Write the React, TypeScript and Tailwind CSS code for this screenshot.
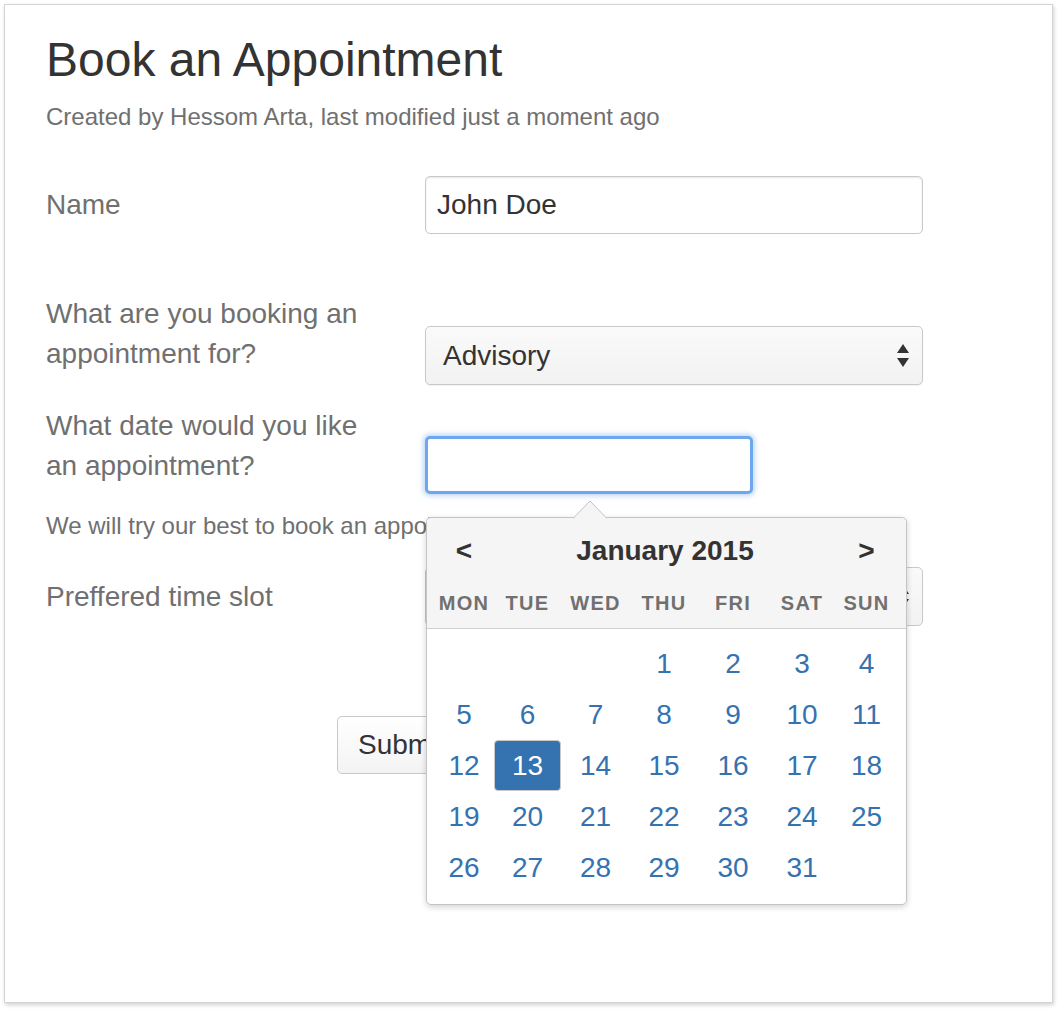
import React from 'react';

const DAYS = ['MON', 'TUE', 'WED', 'THU', 'FRI', 'SAT', 'SUN'];
const COLS = 'grid grid-cols-[60px_67px_69px_68px_70px_68px_61px]';

function SelectArrows() {
  return (
    <svg width="14" height="26" viewBox="0 0 14 26" className="shrink-0">
      <path d="M7 1 L13 10 L1 10 Z" fill="#333" />
      <path d="M1 15 L13 15 L7 24 Z" fill="#333" />
    </svg>
  );
}

function Calendar() {
  const cells: (number | null)[] = [null, null, null];
  for (let d = 1; d <= 31; d++) cells.push(d);

  return (
    <div className="absolute left-[1px] top-[81px] z-10 w-[481px] h-[388px] rounded-[5px] border border-[#c4c4c4] bg-white shadow-[0_2px_6px_rgba(0,0,0,0.18)]">
      <svg width="34" height="19" viewBox="0 0 34 19" className="absolute left-[146px] top-[-18px]">
        <path d="M0 18.5 L17 1 L34 18.5" fill="#f5f5f5" stroke="#c4c4c4" strokeWidth="1" />
      </svg>
      <div className="rounded-t-[5px] border-b border-[#cfcfcf] bg-[#f5f5f5] px-[7px] pb-[6px]">
        <div className={`${COLS} h-[66px] items-center text-[28px] font-bold text-[#333]`}>
          <span className="text-center">&lt;</span>
          <span className="col-span-5 text-center">January 2015</span>
          <span className="text-center">&gt;</span>
        </div>
        <div className={`${COLS} h-[38px] items-center text-[20px] font-bold tracking-[1.3px] text-[#707070]`}>
          {DAYS.map((d) => (
            <span key={d} className="text-center">{d}</span>
          ))}
        </div>
      </div>
      <div className={`${COLS} px-[7px] pt-[9px]`}>
        {cells.map((d, i) =>
          d === 13 ? (
            <div
              key={i}
              className="flex h-[51px] items-center justify-center rounded-[4px] border border-[#c9c9c9] bg-[#3572b0] text-[28px] text-white"
            >
              {d}
            </div>
          ) : (
            <div key={i} className="flex h-[51px] items-center justify-center text-[28px] text-[#3572b0]">
              {d}
            </div>
          )
        )}
      </div>
    </div>
  );
}

export default function App() {
  return (
    <div className="min-h-screen bg-white p-[4px] font-['Liberation_Sans',Arial,sans-serif]">
      <div className="h-[999px] w-[1049px] border border-[#d4d4d4] bg-white pl-[41px] pt-[28px] shadow-[1px_2px_4px_rgba(0,0,0,0.18)]">
        <h1 className="text-[48px] leading-[53px] text-[#333]">Book an Appointment</h1>
        <p className="mt-[14px] text-[24px] leading-[34px] text-[#707070]">
          Created by Hessom Arta, last modified just a moment ago
        </p>

        {/* Name */}
        <div className="mt-[42px] flex items-center">
          <label className="w-[379px] text-[28px] leading-[40px] text-[#707070]">Name</label>
          <input
            readOnly
            value="John Doe"
            className="h-[58px] w-[498px] rounded-[5px] border border-[#c8c8c8] bg-white px-[11px] text-[28px] text-[#333] shadow-[inset_0_1px_2px_rgba(0,0,0,0.1)] outline-none"
          />
        </div>

        {/* Booking for */}
        <div className="mt-[60px] flex items-start">
          <label className="w-[379px] text-[28px] leading-[40px] text-[#707070]">
            What are you booking an
            <br />
            appointment for?
          </label>
          <div className="mt-[32px] flex h-[59px] w-[498px] items-center justify-between rounded-[5px] border border-[#c8c8c8] bg-gradient-to-b from-[#fafafa] to-[#f2f2f2] pl-[17px] pr-[12px] text-[28px] text-[#333] shadow-[0_1px_1px_rgba(0,0,0,0.06)]">
            <span>Advisory</span>
            <SelectArrows />
          </div>
        </div>

        {/* Date */}
        <div className="mt-[21px] flex items-start">
          <label className="w-[379px] text-[28px] leading-[40px] text-[#707070]">
            What date would you like
            <br />
            an appointment?
          </label>
          <div className="relative mt-[30px]">
            <div className="h-[58px] w-[328px] rounded-[5px] border-[3px] border-[#6ea7ee] bg-white shadow-[0_0_5px_2px_rgba(110,167,238,0.45)]" />
            <Calendar />
          </div>
        </div>

        <p className="mt-[15px] text-[24px] leading-[34px] text-[#707070]">
          We will try our best to book an appointment on your chosen date.
        </p>

        {/* Time slot */}
        <div className="mt-[24px] flex items-center">
          <label className="w-[379px] text-[28px] leading-[40px] text-[#707070]">Preffered time slot</label>
          <div className="flex h-[59px] w-[498px] items-center justify-between rounded-[5px] border border-[#c8c8c8] bg-gradient-to-b from-[#fafafa] to-[#f2f2f2] pl-[17px] pr-[12px] text-[28px] text-[#333]">
            <span>Morning</span>
            <SelectArrows />
          </div>
        </div>

        <div className="mt-[90px] pl-[291px]">
          <button className="h-[58px] rounded-[5px] border border-[#c8c8c8] bg-gradient-to-b from-white to-[#f3f3f3] px-[20px] text-[28px] text-[#333]">
            Submit
          </button>
        </div>
      </div>
    </div>
  );
}
